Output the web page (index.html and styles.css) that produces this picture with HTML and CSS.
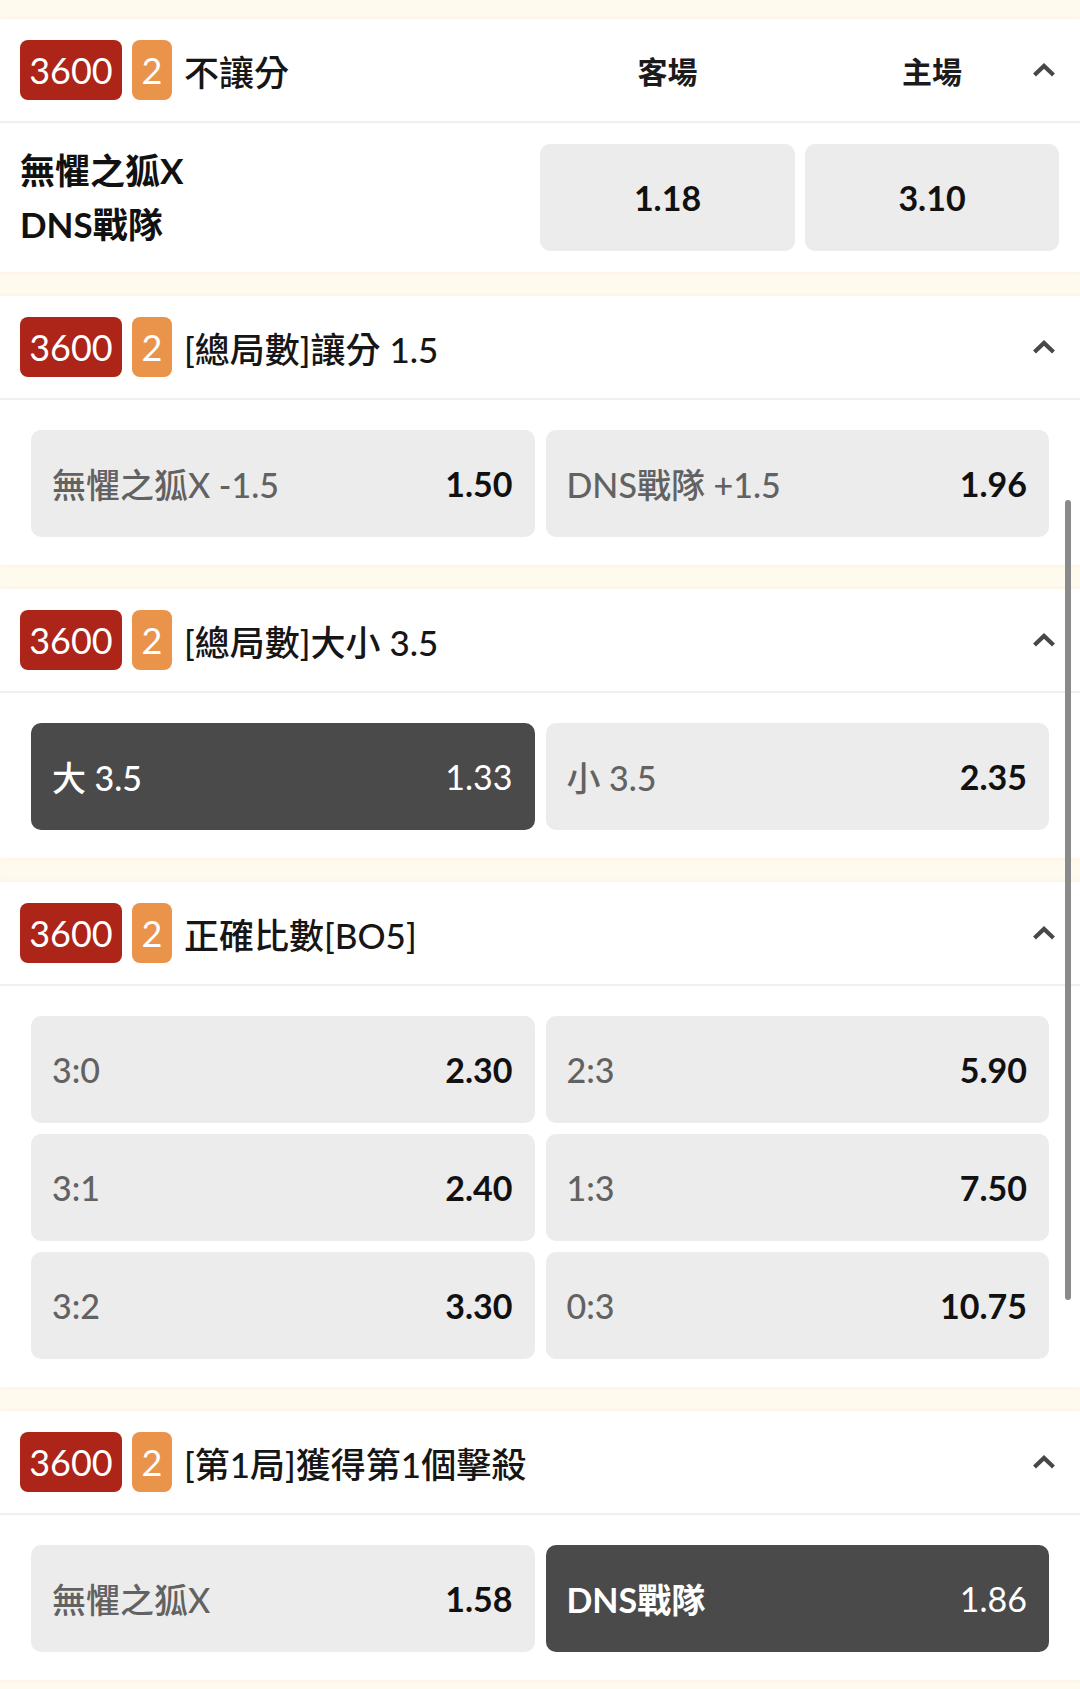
FILE: index.html
```html
<!DOCTYPE html>
<html lang="zh-Hant">
<head>
<meta charset="utf-8">
<title>Markets</title>
<link rel="stylesheet" href="styles.css">
</head>
<body>
<div class="page">
  <section class="card">
    <header class="head head-cols">
      <div class="tags"><span class="badge badge-red">3600</span><span class="badge badge-orange">2</span><span class="title">不讓分</span></div>
      <div class="col-label">客場</div>
      <div class="col-label col-last"><span></span><span>主場</span><svg class="chev" width="24" height="14" viewBox="0 0 24 14"><polyline points="2.5,12 12,3 21.5,12" fill="none" stroke="#484848" stroke-width="4.2" stroke-linejoin="miter"/></svg></div>
    </header>
    <div class="match">
      <div class="teams"><div>無懼之狐X</div><div>DNS戰隊</div></div>
      <div class="opt center"><span class="odd">1.18</span></div>
      <div class="opt center"><span class="odd">3.10</span></div>
    </div>
  </section>

  <section class="card">
    <header class="head">
      <div class="tags"><span class="badge badge-red">3600</span><span class="badge badge-orange">2</span><span class="title">[總局數]讓分 1.5</span></div>
      <svg class="chev" width="24" height="14" viewBox="0 0 24 14"><polyline points="2.5,12 12,3 21.5,12" fill="none" stroke="#484848" stroke-width="4.2"/></svg>
    </header>
    <div class="grid2">
      <div class="opt"><span class="lbl">無懼之狐X -1.5</span><span class="odd">1.50</span></div>
      <div class="opt"><span class="lbl">DNS戰隊 +1.5</span><span class="odd">1.96</span></div>
    </div>
  </section>

  <section class="card">
    <header class="head">
      <div class="tags"><span class="badge badge-red">3600</span><span class="badge badge-orange">2</span><span class="title">[總局數]大小 3.5</span></div>
      <svg class="chev" width="24" height="14" viewBox="0 0 24 14"><polyline points="2.5,12 12,3 21.5,12" fill="none" stroke="#484848" stroke-width="4.2"/></svg>
    </header>
    <div class="grid2">
      <div class="opt sel"><span class="lbl">大 3.5</span><span class="odd">1.33</span></div>
      <div class="opt"><span class="lbl">小 3.5</span><span class="odd">2.35</span></div>
    </div>
  </section>

  <section class="card">
    <header class="head">
      <div class="tags"><span class="badge badge-red">3600</span><span class="badge badge-orange">2</span><span class="title">正確比數[BO5]</span></div>
      <svg class="chev" width="24" height="14" viewBox="0 0 24 14"><polyline points="2.5,12 12,3 21.5,12" fill="none" stroke="#484848" stroke-width="4.2"/></svg>
    </header>
    <div class="grid2">
      <div class="opt"><span class="lbl">3:0</span><span class="odd">2.30</span></div>
      <div class="opt"><span class="lbl">2:3</span><span class="odd">5.90</span></div>
      <div class="opt"><span class="lbl">3:1</span><span class="odd">2.40</span></div>
      <div class="opt"><span class="lbl">1:3</span><span class="odd">7.50</span></div>
      <div class="opt"><span class="lbl">3:2</span><span class="odd">3.30</span></div>
      <div class="opt"><span class="lbl">0:3</span><span class="odd">10.75</span></div>
    </div>
  </section>

  <section class="card">
    <header class="head">
      <div class="tags"><span class="badge badge-red">3600</span><span class="badge badge-orange">2</span><span class="title">[第1局]獲得第1個擊殺</span></div>
      <svg class="chev" width="24" height="14" viewBox="0 0 24 14"><polyline points="2.5,12 12,3 21.5,12" fill="none" stroke="#484848" stroke-width="4.2"/></svg>
    </header>
    <div class="grid2">
      <div class="opt"><span class="lbl">無懼之狐X</span><span class="odd">1.58</span></div>
      <div class="opt sel"><span class="lbl lbl-strong">DNS戰隊</span><span class="odd">1.86</span></div>
    </div>
  </section>

  <div class="scrollbar"></div>
</div>
</body>
</html>
```

FILE: styles.css
```css
html, body {
  margin: 0;
  padding: 0;
}
body {
  background: #fffaee;
  font-family: Lato, "Noto Sans CJK TC Medium", "Noto Sans CJK TC", sans-serif;
  color: #1b1b1b;
}
.page {
  position: relative;
  display: flex;
  flex-direction: column;
  gap: 24px;
  padding-top: 19px;
  min-height: 1689px;
  box-sizing: border-box;
}
.card {
  background: #ffffff;
  box-shadow: 0 0 6px rgba(230, 215, 180, 0.25);
}
.head {
  height: 102px;
  border-bottom: 2px solid #f0f0f0;
  display: flex;
  align-items: center;
  padding: 0 24px 0 20px;
}
.head-cols {
  display: grid;
  grid-template-columns: 1fr 255px 254px;
  column-gap: 10px;
  padding: 0 21px 0 20px;
  align-items: center;
}
.tags {
  display: flex;
  align-items: center;
}
.badge {
  height: 60px;
  box-sizing: border-box;
  display: inline-flex;
  align-items: center;
  justify-content: center;
  border-radius: 8px;
  color: #ffffff;
  font-family: Lato, sans-serif;
  font-size: 36px;
  font-weight: 400;
}
.badge-red {
  background: #ad2419;
  width: 102px;
}
.badge-orange {
  background: #ea934b;
  width: 40px;
  margin-left: 10px;
}
.title {
  margin-left: 12px;
  font-size: 35px;
  font-weight: 500;
  color: #161616;
}
.head .chev {
  margin-left: auto;
}
.col-label {
  text-align: center;
  font-family: Lato, "Noto Sans CJK TC", sans-serif;
  font-size: 30px;
  font-weight: 700;
  color: #1b1b1b;
}
.col-last {
  display: grid;
  grid-template-columns: 1fr auto 1fr;
  align-items: center;
}
.col-last .chev {
  justify-self: end;
  margin-right: 3px;
}
.match {
  display: grid;
  grid-template-columns: 1fr 255px 254px;
  column-gap: 10px;
  align-items: center;
  padding: 20px 21px 21px 20px;
}
.teams {
  font-family: Lato, "Noto Sans CJK TC", sans-serif;
  font-size: 35px;
  font-weight: 700;
  line-height: 54px;
  color: #111111;
}
.grid2 {
  display: grid;
  grid-template-columns: 1fr 1fr;
  gap: 11px;
  padding: 30px 31px 28px;
}
.opt {
  height: 107px;
  box-sizing: border-box;
  border-radius: 10px;
  background: #ececec;
  display: flex;
  align-items: center;
  justify-content: space-between;
  padding: 0 22px 0 21px;
  font-size: 34px;
}
.opt.center {
  justify-content: center;
  padding: 0;
}
.lbl {
  color: #626262;
  font-weight: 500;
}
.odd {
  color: #111111;
  font-weight: 700;
}
.opt.sel {
  background: #4a4a4a;
}
.opt.sel .lbl {
  color: #ffffff;
}
.opt.sel .lbl-strong {
  font-family: Lato, "Noto Sans CJK TC", sans-serif;
  font-weight: 700;
}
.opt.sel .odd {
  color: #ffffff;
  font-weight: 400;
}
.scrollbar {
  position: absolute;
  left: 1065px;
  top: 500px;
  width: 6px;
  height: 800px;
  border-radius: 3px;
  background: #8a8a8a;
}
```
